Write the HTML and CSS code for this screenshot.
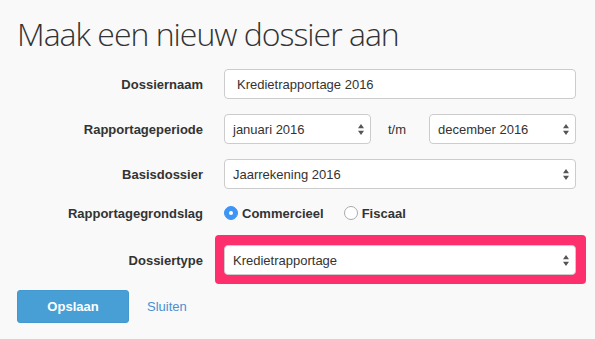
FILE: index.html
```
<!DOCTYPE html>
<html lang="nl">
<head>
<meta charset="utf-8">
<title>Maak een nieuw dossier aan</title>
<link rel="stylesheet" href="styles.css">
</head>
<body>
<div class="page">
  <h1 class="title">Maak een nieuw dossier aan</h1>
  <form class="form">
    <div class="row">
      <label class="label">Dossiernaam</label>
      <div class="control"><div class="input">Kredietrapportage 2016</div></div>
    </div>
    <div class="row">
      <label class="label">Rapportageperiode</label>
      <div class="control period">
        <div class="select"><span>januari 2016</span><svg class="arrows" width="7" height="13" viewBox="0 0 7 13"><path d="M3.5 0 L7 5 L0 5 Z M0 8 L7 8 L3.5 13 Z" fill="#555"/></svg></div>
        <span class="tm">t/m</span>
        <div class="select"><span>december 2016</span><svg class="arrows" width="7" height="13" viewBox="0 0 7 13"><path d="M3.5 0 L7 5 L0 5 Z M0 8 L7 8 L3.5 13 Z" fill="#555"/></svg></div>
      </div>
    </div>
    <div class="row">
      <label class="label">Basisdossier</label>
      <div class="control"><div class="select"><span>Jaarrekening 2016</span><svg class="arrows" width="7" height="13" viewBox="0 0 7 13"><path d="M3.5 0 L7 5 L0 5 Z M0 8 L7 8 L3.5 13 Z" fill="#555"/></svg></div></div>
    </div>
    <div class="row row-radio">
      <label class="label">Rapportagegrondslag</label>
      <div class="control radios">
        <span class="radio-opt"><span class="radio checked"></span>Commercieel</span>
        <span class="radio-opt"><span class="radio"></span>Fiscaal</span>
      </div>
    </div>
    <div class="row row-type">
      <label class="label">Dossiertype</label>
      <div class="control">
        <div class="highlight">
          <div class="select"><span>Kredietrapportage</span><svg class="arrows" width="7" height="13" viewBox="0 0 7 13"><path d="M3.5 0 L7 5 L0 5 Z M0 8 L7 8 L3.5 13 Z" fill="#555"/></svg></div>
        </div>
      </div>
    </div>
    <div class="actions">
      <button type="button" class="btn">Opslaan</button>
      <a class="link" href="#">Sluiten</a>
    </div>
  </form>
</div>
</body>
</html>
```
FILE: styles.css
```
html, body {
  margin: 0;
  padding: 0;
  background: #f9f9f9;
}
body {
  font-family: "Liberation Sans", Arial, sans-serif;
  font-size: 13px;
  color: #333;
}
.page {
  padding: 14px 19px 0 17px;
}
.title {
  margin: 0;
  font-family: "Open Sans", sans-serif;
  font-weight: 300;
  font-size: 32px;
  letter-spacing: -1px;
  line-height: 40px;
  color: #333;
}
.form {
  margin-top: 15px;
  display: flex;
  flex-direction: column;
}
.row {
  display: grid;
  grid-template-columns: 186px 1fr;
  column-gap: 21px;
  align-items: center;
  margin-bottom: 15px;
}
.label {
  text-align: right;
  font-weight: bold;
  color: #333;
}
.input, .select {
  box-sizing: border-box;
  height: 30px;
  background: #fff;
  border: 1px solid #ccc;
  border-radius: 4px;
  display: flex;
  align-items: center;
  color: #333;
}
.input {
  padding: 0 12px;
}
.select {
  padding: 0 6px 0 8px;
  justify-content: space-between;
}
.arrows {
  display: block;
  width: 6px;
  height: 13px;
}
.period {
  display: grid;
  grid-template-columns: 147px 1fr 147px;
  align-items: center;
}
.tm {
  padding-left: 17px;
}
.row-radio {
  margin-bottom: 0;
  height: 20px;
  margin-top: -1px;
}
.radios {
  display: flex;
  align-items: center;
  gap: 20px;
  font-weight: bold;
}
.radio-opt {
  display: flex;
  align-items: center;
  gap: 4px;
}
.radio {
  box-sizing: border-box;
  width: 14px;
  height: 14px;
  border-radius: 50%;
  border: 1px solid #aaa;
  background: #fff;
  display: inline-flex;
  align-items: center;
  justify-content: center;
}
.radio.checked {
  background: #3d96f5;
  border-color: #3d96f5;
}
.radio.checked::after {
  content: "";
  width: 4px;
  height: 4px;
  border-radius: 50%;
  background: #fff;
}
.row-type {
  margin-top: 22px;
}
.highlight {
  background: #fd2f6c;
  border-radius: 4px;
  padding: 10px 10px 9px 9px;
  margin: -10px -10px -9px -9px;
}
.actions {
  display: flex;
  align-items: center;
  gap: 18px;
}
.btn {
  width: 112px;
  height: 33px;
  background: #479fd6;
  border: 1px solid #4399cf;
  border-radius: 3px;
  color: #fff;
  font-family: "Liberation Sans", Arial, sans-serif;
  font-weight: bold;
  font-size: 13px;
  padding: 0;
}
.link {
  color: #4a8fd3;
  text-decoration: none;
}
```
